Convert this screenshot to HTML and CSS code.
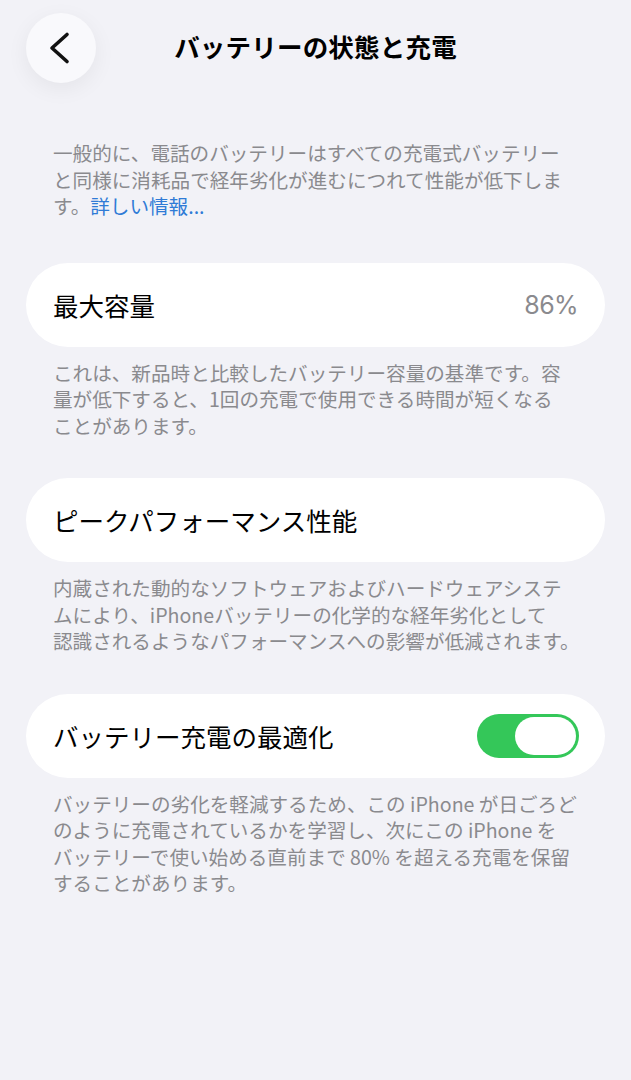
FILE: index.html
```html
<!DOCTYPE html>
<html lang="ja">
<head>
<meta charset="utf-8">
<title>バッテリーの状態と充電</title>
<link rel="stylesheet" href="styles.css">
</head>
<body>
<div class="page">
  <header class="nav">
    <button class="back" aria-label="戻る">
      <svg viewBox="0 0 70 70" width="70" height="70"><polyline points="41,21.5 26,35 41,48.5" fill="none" stroke="#111" stroke-width="3.6" stroke-linecap="round" stroke-linejoin="round"/></svg>
    </button>
    <h1 class="title">バッテリーの状態と充電</h1>
    <span class="spacer"></span>
  </header>

  <p class="note intro">一般的に、電話のバッテリーはすべての充電式バッテリー<br>と同様に消耗品で経年劣化が進むにつれて性能が低下しま<br>す。<a class="link" href="#">詳しい情報...</a></p>

  <div class="card">
    <span class="label">最大容量</span>
    <span class="value">86%</span>
  </div>
  <p class="note">これは、新品時と比較したバッテリー容量の基準です。容<br>量が低下すると、1回の充電で使用できる時間が短くなる<br>ことがあります。</p>

  <div class="card">
    <span class="label">ピークパフォーマンス性能</span>
  </div>
  <p class="note">内蔵された動的なソフトウェアおよびハードウェアシステ<br>ムにより、iPhoneバッテリーの化学的な経年劣化として<br>認識されるようなパフォーマンスへの影響が低減されます。</p>

  <div class="card">
    <span class="label">バッテリー充電の最適化</span>
    <span class="toggle"><span class="knob"></span></span>
  </div>
  <p class="note">バッテリーの劣化を軽減するため、この iPhone が日ごろど<br>のように充電されているかを学習し、次にこの iPhone を<br>バッテリーで使い始める直前まで 80% を超える充電を保留<br>することがあります。</p>
</div>
</body>
</html>
```

FILE: styles.css
```css
html, body {
  margin: 0;
  padding: 0;
  background: #f2f2f7;
}
body {
  font-family: "Noto Sans CJK JP", "Noto Sans", sans-serif;
  color: #000;
}
.page {
  width: 631px;
  min-height: 1080px;
  box-sizing: border-box;
  padding-top: 13px;
}
.nav {
  display: grid;
  grid-template-columns: 70px 1fr 70px;
  align-items: center;
  height: 70px;
  padding: 0 26px;
}
.back {
  width: 70px;
  height: 70px;
  padding: 0;
  border: none;
  border-radius: 50%;
  background: #f9f9fc;
  box-shadow: 0 6px 22px rgba(0, 0, 0, 0.06);
  display: block;
}
.back svg { display: block; }
.title {
  margin: 0 0 5px;
  text-align: center;
  font-size: 25.5px;
  font-weight: 700;
  letter-spacing: 0.2px;
  line-height: 1;
}
.note {
  margin: 0 0 39px;
  padding: 0 0 0 53px;
  font-size: 19.6px;
  line-height: 26.5px;
  color: #8a8a8e;
  white-space: nowrap;
}
.intro {
  margin-top: 57px;
  margin-bottom: 43px;
}
.link {
  color: #2f7bd6;
  text-decoration: none;
}
.card {
  margin: 0 26px 13px;
  height: 84px;
  border-radius: 42px;
  background: #fff;
  display: flex;
  align-items: center;
  justify-content: space-between;
  padding: 0 26px 0 27px;
}
.label {
  font-size: 25.5px;
  line-height: 1;
}
.value {
  font-family: "Inter", "Liberation Sans", sans-serif;
  font-size: 25px;
  letter-spacing: -0.6px;
  color: #8a8a8e;
  padding-right: 1px;
}
.toggle {
  width: 102px;
  height: 44px;
  box-sizing: border-box;
  border-radius: 22px;
  background: #34c759;
  display: flex;
  justify-content: flex-end;
  align-items: center;
  padding: 3px;
}
.knob {
  width: 61px;
  height: 38px;
  border-radius: 19px;
  background: #fff;
}
```
